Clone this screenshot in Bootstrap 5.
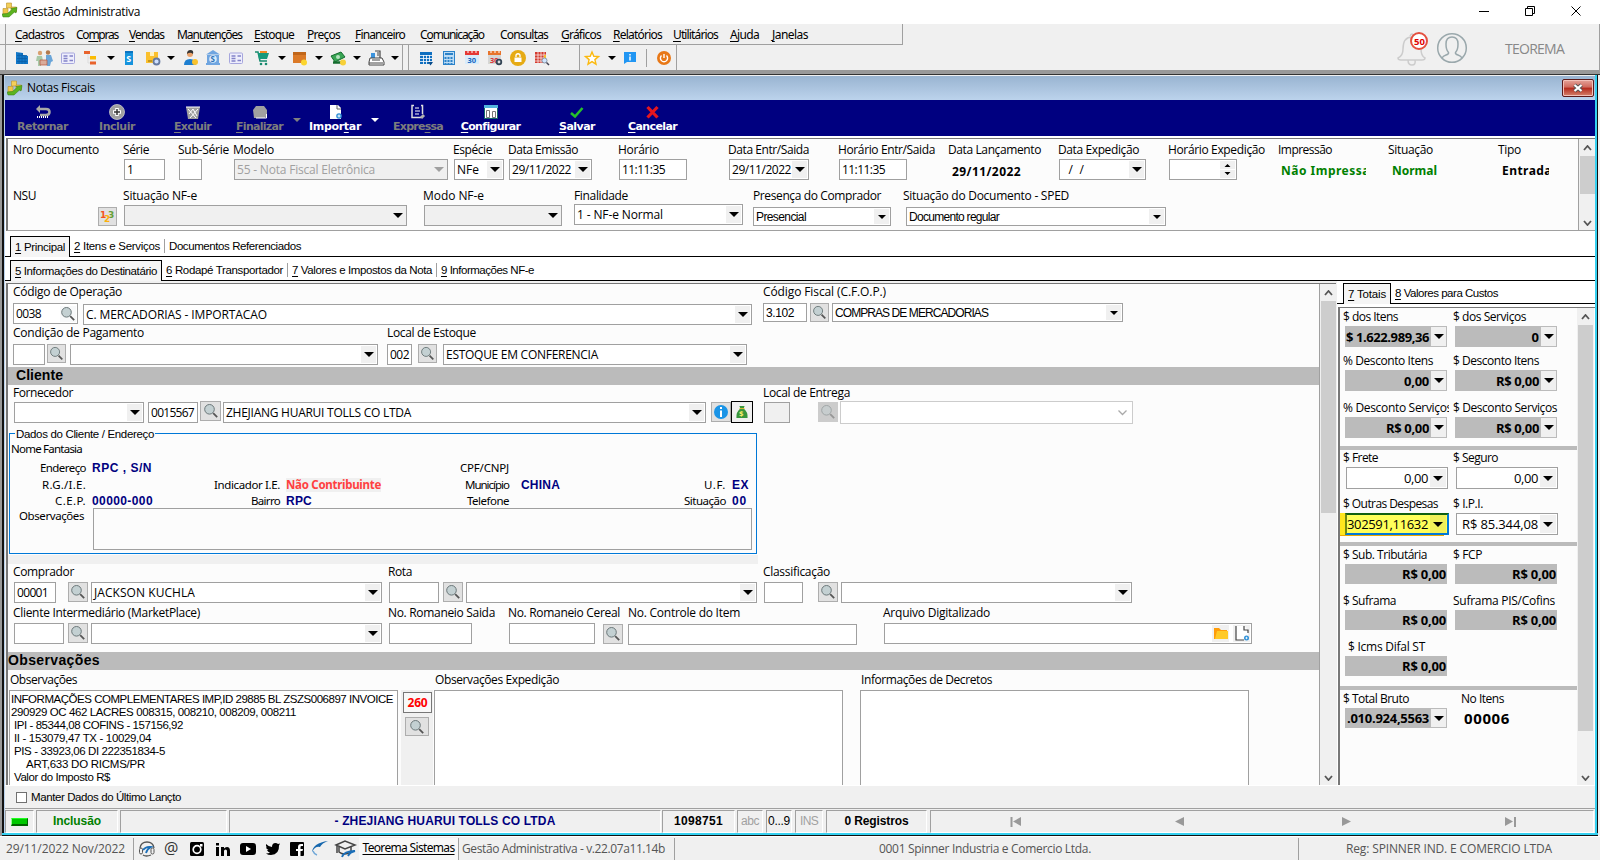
<!DOCTYPE html>
<html lang="pt-BR">
<head>
    <meta charset="UTF-8">
    <meta name="viewport" content="width=device-width, initial-scale=1.0">
    <title>Gestão Administrativa</title>
    <link href="https://cdn.jsdelivr.net/npm/bootstrap@5.3.0/dist/css/bootstrap.min.css" rel="stylesheet">
    <style>
        body { width: 1600px; height: 860px; overflow: hidden; background: #f0f0f0; color: #000; font: 12px/16px "Open Sans", "Noto Sans", sans-serif; }
        svg { display: block; overflow: visible; }
        [data-w] { display: inline-block; white-space: pre; justify-self: start; flex: none; }
        u { text-underline-offset: 2px; }

        /* rows: even tracks hold the items, odd tracks are the gaps */
        .slots, .labels { display: grid; align-items: start; }
        .slots > :nth-child(1) { grid-column: 2; } .slots > :nth-child(2) { grid-column: 4; }
        .slots > :nth-child(3) { grid-column: 6; } .slots > :nth-child(4) { grid-column: 8; }
        .slots > :nth-child(5) { grid-column: 10; } .slots > :nth-child(6) { grid-column: 12; }
        .slots > :nth-child(7) { grid-column: 14; } .slots > :nth-child(8) { grid-column: 16; }
        .slots > :nth-child(9) { grid-column: 18; } .slots > :nth-child(10) { grid-column: 20; }
        .slots > :nth-child(11) { grid-column: 22; } .slots > :nth-child(12) { grid-column: 24; }
        .slots > :nth-child(13) { grid-column: 26; } .slots > :nth-child(14) { grid-column: 28; }
        .slots > :nth-child(15) { grid-column: 30; } .slots > :nth-child(16) { grid-column: 32; }
        .slots > :nth-child(17) { grid-column: 34; } .slots > :nth-child(18) { grid-column: 36; }
        .slots > :nth-child(19) { grid-column: 38; }
        .slots > * { grid-row: 1; }
        .labels { padding-left: 5px; }

        /* title and menus */
        .titlebar { height: 24px; background: #fff; padding: 0 20px 4px 2px; }
        .titlebar .cap { margin-left: 5px; padding-top: 3px; }
        .topbar { height: 50px; background: #f0f0f0; border-bottom: 4px solid #999; border-right: 1px solid #a0a0a0; }
        .menubar { width: 903px; height: 21px; border: solid #a0a0a0; border-width: 0 1px 1px 0; padding-left: 15px; font: 12px/21px "Noto Sans", sans-serif; grid-template-columns: 61px 53px 48px 77px 53px 48px 65px 80px 61px 52px 60px 57px 42px 40px; }
        .grip { box-shadow: inset 5px 0 #f0f0f0, inset 6px 0 #a0a0a0; }
        .tools { height: 25px; align-items: center; border-right: 1px solid #a0a0a0; }
        .tools-a { width: 403px; grid-template-columns: 14px 16px 6px 16px 8px 16px 7px 16px 8px 8px 6px 16px 8px 16px 6px 8px 8px 16px 6px 16px 7px 16px 10px 16px 8px 8px 6px 16px 7px 8px 8px 16px 6px 8px 7px 16px 7px 8px; }
        .tools-b { width: 177px; grid-template-columns: 15px 16px 7px 16px 7px 16px 7px 16px 7px 16px 8px 16px; }
        .tools-c { width: 97px; grid-template-columns: 4px 16px 8px 8px 6px 16px 8px 1px 9px 16px; }
        .tri { width: 0; height: 0; border: solid transparent; border-width: 4px 4px 0; border-top-color: #000; justify-self: center; }
        .user-area { padding: 4px 35px 0 0; gap: 36px; }
        .user-name { color: #888; font-size: 14px; }

        /* inner window */
        .mdi { height: 762px; padding: 1px 5px 0 5px; background: linear-gradient(90deg, #999 2px, #111 2px 4px, #b9d1ea 4px 5px, transparent 5px calc(100% - 5px), #35d0f0 calc(100% - 5px) calc(100% - 3px), #111 calc(100% - 3px) calc(100% - 2px), #f0f0f0 calc(100% - 2px)), #f0f0f0; border-top: 1px solid #333; }
        .mdi-title { height: 24px; background: linear-gradient(#99b4d1, #bcd3ec); padding: 0 1px 0 2px; }
        .mdi-close { width: 32px; height: 18px; border: 1px solid #5c1a1a; border-radius: 2px; background: linear-gradient(#e5a49a, #d0695c 45%, #b4291b 50%, #d4826c); box-shadow: inset 0 0 0 1px #f2c0b8; }
        .mdi-foot { height: 3px; background: linear-gradient(#35d0f0 2px, #111 2px); margin: 0 -3px; }
        .actions { height: 36px; background: #000080; color: #fff; font: bold 11px/14px "DejaVu Sans", sans-serif; grid-template-columns: 12px 51px 31px 36px 39px 37px 25px 47px 10px 8px 8px 52px 10px 8px 14px 50px 18px 59px 39px 36px 33px 49px; }
        .actions .act { display: flex; flex-direction: column; align-items: center; padding-top: 4px; }
        .actions .act svg { flex: none; }
        .actions .off { color: #7d7d7d; }
        .actions .tri { margin-top: 18px; border-top-color: #fff; }
        .actions .tri.dim { border-top-color: #808080; }

        /* sunken panels */
        .sunk { margin-left: 1px; background: #fcfcfc; border: solid #777; border-width: 1px 0 0 2px; }
        .head-wrap { background: #fff; padding: 2px 0; }
        .head-wrap .sunk { border-bottom: 1px solid #a0a0a0; }
        .headform { width: 1566px; grid-template-rows: 20px 27px 18px 26px; }
        .cols-h1l { line-height: 22px; grid-template-columns: 110px 55px 55px 220px 55px repeat(10, 110px); }
        .cols-h1 { grid-template-columns: 116px 41px 14px 23px 32px 214px 6px 50px 5px 83px 27px 68px 42px 80px 30px 68px 45px 80px 27px 87px 23px 68px 44px 85px 26px 90px 20px 47px; }
        .cols-h2l { line-height: 20px; grid-template-columns: 110px 300px 151px 179px 150px 150px; }
        .cols-h2 { grid-template-columns: 90px 19px 7px 283px 17px 138px 12px 169px 10px 138px 15px 260px; }
        .bold12 { font: bold 12px/25px "Open Sans", sans-serif; white-space: nowrap; }
        .verd { font: bold 12px/24px "Noto Sans", sans-serif; overflow: hidden; white-space: nowrap; }
        .green { color: #008000; }

        /* fields */
        .fld { height: 21px; background: #fff; border: 1px solid #a0a0a0; display: flex; align-items: center; padding: 0 1px 0 2px; overflow: hidden; min-width: 0; white-space: pre; }
        .fld > .arr { margin-left: auto; width: 15px; height: 17px; background: #f0f0f0; flex: none; display: flex; align-items: center; justify-content: center; }
        .fld > .arr::after { content: ""; border: solid transparent; border-width: 5px 5px 0; border-top-color: #000; }
        .fld.low { height: 19px; } .fld.low > .arr { height: 15px; } .low > .arr::after { border-width: 4px 4px 0; }
        .fld.gray { background: #f0f0f0; }
        .fld.off { background: #f0f0f0; color: #a0a0a0; } .off > .arr::after { border-top-color: #a0a0a0; }
        .fld.pale { height: 23px; border-color: #ccc; }
        .sans { font-family: "Liberation Sans", sans-serif; }
        .lens { height: 20px; background: #e1e1e1; border: 1px solid #adadad; display: flex; align-items: center; justify-content: center; }
        .lens.low { height: 19px; }
        .lens.boxed { height: 22px; border-color: #000; background: #f0f0f0; }
        .lens.dim { background: #ccc; border-color: #ccc; }
        .t1 { margin-top: 1px; } .t3 { margin-top: 3px; }
        .section-bar { background: #bbb; font: bold 14px/17px "Liberation Sans", sans-serif; }

        /* tabs */
        .tabs { height: 24px; background: #fff; border-bottom: 1px solid #000; font: 11.5px/20px "Liberation Sans", sans-serif; padding-left: 5px; align-items: flex-end; }
        .tabs .on { height: 21px; background: #f5f5f5; border: 1px solid #000; border-bottom: 0; padding: 0 4px; margin-bottom: -1px; }
        .tabs .pg { padding: 0 4px; height: 20px; }
        .tabs .bar { width: 1px; height: 14px; background: #a0a0a0; margin-bottom: 3px; }
        .tabs-side { height: 23px; padding-left: 6px; }
        .workarea { height: 504px; }
        .workarea > .sunk { margin-top: 2px; flex: none; }
        .side { margin-left: 1px; background: #fff; }
        .side .sunk { height: 478px; margin-top: 3px; }

        /* scrollbars */
        .vscroll { width: 17px; background: #f0f0f0; display: flex; flex-direction: column; align-items: center; padding: 6px 1px 4px; border-left: 1px solid #a0a0a0; flex: none; }
        .vscroll i { width: 15px; background: #cdcdcd; margin-top: 5px; margin-bottom: auto; }
        .vs-head i { height: 38px; } .vs-main i { height: 212px; } .vs-tot i { height: 406px; }

        /* main form */
        .mainform { width: 1311px; grid-template-rows: 19px 22px 19px 23px 18px 16px 26px 128px 9px 18px 23px 18px 29px 18px 20px 95px; grid-template-columns: minmax(0, 1fr); }
        .l750 { grid-template-columns: 750px 200px; } .l374 { grid-template-columns: 374px 200px; } .l375 { grid-template-columns: 375px 375px 200px; }
        .l-rom { grid-template-columns: 375px 120px 120px 255px 200px; } .l-obs { grid-template-columns: 425px 426px 200px; padding-left: 2px; line-height: 20px; }
        .l-for { line-height: 15px; }
        .cols-op { grid-template-columns: 5px 65px 5px 669px 11px 44px 3px 19px 3px 291px; }
        .cols-pg { grid-template-columns: 5px 32px 2px 19px 4px 308px 9px 25px 6px 19px 6px 304px; }
        .cols-fo { grid-template-columns: 6px 130px 4px 50px 2px 21px 2px 483px 5px 20px 0 22px 11px 26px 28px 20px 2px 293px; }
        .cols-co { grid-template-columns: 6px 42px 12px 20px 3px 291px 7px 50px 4px 20px 3px 291px 7px 39px 15px 20px 3px 291px; }
        .cols-ro { grid-template-columns: 6px 50px 4px 20px 3px 291px 7px 83px 37px 86px 8px 20px 5px 229px 27px 368px; }
        .cols-ob { grid-template-columns: 1px 389px 3px 32px 1px 409px 17px 389px; align-items: stretch; }

        .client { margin: 6px 0 1px 1px; width: 748px; border: 1px solid #0078d7; display: grid; grid-template-rows: 7px 18px 17px 17px 15px 1fr; font: 11.5px/16px "Noto Sans", sans-serif; padding-left: 1px; }
        .client .ttl { height: 16px; margin: -8px 0 0 4px; background: #fcfcfc; font: 11.5px/16px "Liberation Sans", sans-serif; justify-self: start; padding: 0 1px; }
        .cl-row { display: grid; align-items: center; grid-template-columns: 75px 123px 71px 157px 72px 143px 74px 30px; }
        .cl-row > :nth-child(odd) { justify-self: end; }
        .cl-row > b { font: bold 12px/16px "Liberation Sans", sans-serif; color: #000080; margin-left: 6px; }
        .cl-row > b.warn { color: #ff4040; background: #f0f0f0; font: bold 11.5px/14px "Noto Sans", sans-serif; }
        .cl-note { border: 1px solid #a0a0a0; margin: 0 4px 3px 9px; }
        .cl-obs { margin: 0 0 0 8px; }
        .strip { background: #f0f0f0; width: 750px; }
        .memo { background: #fff; border: 1px solid #a0a0a0; border-bottom: 0; font: 11.5px/13px "Liberation Sans", sans-serif; padding: 2px 0 0 1px; }
        .memo div { height: 13px; } .memo .in { padding-left: 3px; } .memo .in2 { padding-left: 15px; }
        .obs-tools { background: #f0f0f0; }
        .code-btn { height: 21px; margin: 2px 1px 0 2px; border: 1px solid #777; background: #f8f8f8; color: #f00; font: bold 12px/19px "Noto Sans", sans-serif; text-align: center; }

        /* totals */
        .totals { width: 237px; display: grid; grid-template-rows: 18px 21px 23px 21px 26px 21px 12px 17px 22px 24px 22px 11px 18px 20px 26px 20px 26px 20px 14px 18px 20px; align-content: start; }
        .totals .labels { grid-template-columns: 110px 120px; padding-left: 3px; align-items: end; padding-bottom: 1px; }
        .totals .slots { grid-template-columns: 5px 102px 8px 102px; align-items: stretch; }
        .totals .cut { width: 106px; overflow: hidden; white-space: nowrap; }
        .val { background: #bbb; font-weight: bold; font-size: 13px; display: flex; align-items: center; justify-content: flex-end; padding: 0 1px; overflow: hidden; white-space: nowrap; }
        .val > .arr { width: 16px; height: 100%; margin-left: 2px; margin-right: -1px; background: #f0f0f0; border: 1px solid #bbb; border-left: 0; flex: none; display: flex; align-items: center; justify-content: center; }
        .val > .arr::after { content: ""; border: solid transparent; border-width: 5px 5px 0; border-top-color: #000; }
        .val.edit { background: #fff; border: 1px solid #a0a0a0; font-weight: normal; padding-right: 1px; margin-left: 1px; margin-right: -1px; }
        .val.edit > .arr { border: 0; height: 18px; margin-right: 0; }
        .val.hot { background: #ffff5a; border: 2px solid #0078d7; border-top-color: #116011; border-left-color: #708a10; box-shadow: -5px 0 #ffe61e, -5px 1px 0 #eda800; margin: 0 -2px 0 0; }
        .val.hot > .arr { background: #f0f05a; }
        .rule { background: #bbb; height: 4px; align-self: end; }
        .count { font: bold 15px/20px "Open Sans", sans-serif; padding-left: 9px; }

        /* status and footer */
        .keep { height: 24px; border-top: 1px solid #fff; border-bottom: 1px solid #a0a0a0; padding-left: 11px; font: 11.5px/22px "Liberation Sans", sans-serif; }
        .keep .form-check-input { width: 11px; height: 11px; border-radius: 0; border: 1px solid #707070; margin: 0 4px 0 0; }
        .status { height: 24px; padding-top: 1px; font: bold 12px/20px "Liberation Sans", sans-serif; text-align: center; grid-template-columns: 0 29px 2px 82px 2px 107px 2px 432px 1px 73px 2px 26px 3px 26px 3px 28px 3px 101px 3px 664px; }
        .status > * { height: 23px; border: 1px solid; border-color: #a0a0a0 #fff #fff #a0a0a0; white-space: nowrap; }
        .thin { font-weight: normal; color: #a0a0a0; }
        .navy { color: #000080; }
        .recnav { grid-template-columns: 79px 12px 153px 10px 157px 10px 153px 12px; align-items: center; }
        .led { width: 17px; height: 8px; background: #00c800; border: solid; border-width: 1px 1px 2px 1px; border-color: #20ff20 #006400 #006400 #90ff90; margin: 7px auto; }
        .foot { height: 24px; color: #555; font: 12px/20px "Open Sans", sans-serif; border-top: 1px solid #fff; align-items: center; grid-template-columns: 6px 119px 8px 1px 4px 18px 8px 18px 8px 18px 7px 16px 9px 18px 7px 16px 8px 16px 6px 20px 4px 24px 0 99px 0 1px 3px 204px 8px 1px 204px 213px 206px 1px 47px 207px; }
        .foot .bar { width: 1px; height: 22px; background: #a0a0a0; }
        .foot .site { background: #f8f8f8; color: #000; height: 22px; text-align: center; font-family: "Noto Sans", sans-serif; }
    </style>
</head>
<body class="d-flex flex-column">

    <!-- icons -->
    <svg width="0" height="0" class="position-absolute">
        <symbol id="i-app" viewBox="0 0 16 16"><path d="M4.500 1h5v5h-5z" fill="#f3cf5b" stroke="#b8902a" stroke-width=".6"/><path d="M1 6.500h5V12H1zM9 5h5.500v5H9z" fill="#efc64a" stroke="#b8902a" stroke-width=".6"/><path d="M0 12l5.500-.5L10 7.500 9 6.500l6-1-1 5.500-1.500-1-5.500 5H1z" fill="#5cb320" stroke="#2f7d12" stroke-width=".5"/></symbol>
        <symbol id="i-lens" viewBox="0 0 16 16"><path d="M10.2 10.2l4 4" stroke="#555" stroke-width="1.8"/><circle cx="6.500" cy="6.300" r="4.800" fill="#c3d0d2" stroke="#6b7779"/></symbol>
        <symbol id="i-card" viewBox="0 0 16 16"><rect x="1.500" y="3" width="13" height="10.500" rx="1" fill="#eeeefc" stroke="#a6a6dd"/><path d="M3.500 6h4M3.500 8.500h4M3.500 11h4M9.500 6h3.500M9.500 10.500h3.500" stroke="#8383c8" stroke-width="1.300"/></symbol>
        <symbol id="i-up" viewBox="0 0 9 6"><path d="M1 5l3.500-4L8 5" fill="none" stroke="#555" stroke-width="1.800"/></symbol>
        <symbol id="i-down" viewBox="0 0 9 6"><path d="M1 1l3.500 4L8 1" fill="none" stroke="#555" stroke-width="1.800"/></symbol>
    </svg>

    <!-- title -->
    <header class="titlebar d-flex align-items-center flex-shrink-0">
        <svg width="16" height="16"><use href="#i-app"/></svg>
        <span class="cap me-auto" data-w="117">Gestão Administrativa</span>
        <svg width="103" height="14" fill="none" stroke="#000"><path d="M2 8.500h10M48.500 5.500h7v7h-7zM50.500 5V3.500h7v7H56M94.500 3.500l9 9M103.500 3.500l-9 9"/></svg>
    </header>

    <!-- menus and tools -->
    <div class="topbar d-flex justify-content-between flex-shrink-0">
        <div>
            <nav class="menubar labels grip">
                <span data-w="49"><u>C</u>adastros</span><span data-w="42">Co<u>m</u>pras</span><span data-w="35"><u>V</u>endas</span><span data-w="65">Ma<u>n</u>utenções</span><span data-w="40"><u>E</u>stoque</span><span data-w="33"><u>P</u>reços</span><span data-w="50"><u>F</u>inanceiro</span><span data-w="64">C<u>o</u>municação</span><span data-w="48">Consul<u>t</u>as</span><span data-w="40"><u>G</u>ráficos</span><span data-w="49"><u>R</u>elatórios</span><span data-w="45"><u>U</u>tilitários</span><span data-w="29"><u>A</u>juda</span><span data-w="36"><u>J</u>anelas</span>
            </nav>
            <div class="d-flex">
                <div class="tools tools-a slots grip">
                    <svg width="16" height="16"><path d="M2 2l7 1v2l5 1v8H2z" fill="#1177c8"/><path d="M3 5.500h10M3 8.500h10M3 11.500h10M5 3v11M8 3v11M11 6v8" stroke="#0a5fa8" stroke-width=".8"/></svg>
                    <svg width="18" height="16"><circle cx="4" cy="3" r="2.200" fill="#d9a06f"/><circle cx="12" cy="2.500" r="2.200" fill="#b37a4d"/><path d="M1 6h5l1 5H5v5H2v-5H0z" fill="#a8c9a8"/><path d="M10 5h5l2 6-2 1-1 4h-3l-1-5z" fill="#6aa5d8"/><path d="M4 10h7v5H4z" fill="#d9ab9a" stroke="#b4543c" stroke-width=".7"/></svg>
                    <svg width="16" height="16"><use href="#i-card"/></svg>
                    <svg width="16" height="16"><path d="M5 4v9h4M5 8h5" stroke="#ddd" fill="none"/><path d="M1 1h6v3H1zM7 11.500h6v3H7z" fill="#e8632c"/><path d="M7 6h6v3.500H7z" fill="#fbbc04"/></svg>
                    <i class="tri"></i>
                    <svg width="16" height="16"><path d="M4 1h8v14H4z" fill="#1593dd"/><path d="M4 1h8v2H4z" fill="#0b74c0"/><text x="5.300" y="12" font-size="9" font-weight="bold" fill="#fff">S</text></svg>
                    <svg width="16" height="16"><path d="M1 2h12v11H1z" fill="#fbc02d"/><path d="M5 2h4v4H5z" fill="#fff2c0"/><path d="M3 11h4" stroke="#8a6a10"/><circle cx="11.500" cy="11.500" r="3" fill="#cfe0ff" stroke="#667aa0" stroke-width="1.800"/></svg>
                    <i class="tri"></i>
                    <svg width="16" height="16"><circle cx="7" cy="4" r="3" fill="#e9a26b"/><path d="M4 4q0-4 3.500-4T10 4Q7 1.500 4 4" fill="#333"/><path d="M1 15q0-6 6-6t6 6z" fill="#1e7fd0"/><circle cx="12" cy="12" r="3" fill="#f9c22e"/></svg>
                    <svg width="16" height="16"><path d="M8 0l7 4.500H1z" fill="#6fa5e0"/><path d="M2 5h12v8H2zM1 13h14v2H1z" fill="#6fa5e0"/><circle cx="8" cy="9" r="3.800" fill="#dcebfa"/><text x="5.500" y="12" font-size="8" font-weight="bold" fill="#2b72b8">S</text></svg>
                    <svg width="16" height="16"><use href="#i-card"/></svg>
                    <svg width="16" height="16"><path d="M1 2h3l2 9h7" fill="none" stroke="#178a6e" stroke-width="1.500"/><path d="M4 3h11l-2 6H5z" fill="#17997b"/><path d="M6 1h7v2H6z" fill="#f08a24"/><circle cx="7" cy="14" r="1.300" fill="#178a6e"/><circle cx="12" cy="14" r="1.300" fill="#178a6e"/></svg>
                    <i class="tri"></i>
                    <svg width="16" height="16"><path d="M1 2h13v11H1z" fill="#db7a28"/><path d="M1 2h13v3H1z" fill="#c1661a"/><circle cx="12" cy="12.500" r="3" fill="#fbd52e"/></svg>
                    <i class="tri"></i>
                    <svg width="16" height="16"><path d="M0 6l10-4 4 5-10 5z" fill="#3aa655" stroke="#146c2e"/><circle cx="7" cy="7" r="2" fill="#b6e3c0"/><path d="M2 12.500h8" stroke="#146c2e" stroke-width="2.500"/><circle cx="12" cy="12.500" r="3" fill="#f7d038"/></svg>
                    <i class="tri"></i>
                    <svg width="17" height="16"><path d="M3 3h4v5H3z" fill="#3b93dd"/><path d="M7 1h5v7M9 3h2M9 5h2" fill="none" stroke="#444" stroke-width="1.200"/><path d="M2 8h12l2 4v3H1v-3z" fill="#fff" stroke="#444"/><path d="M4 10h8M1 13h14" stroke="#444"/></svg>
                    <i class="tri"></i>
                </div>
                <div class="tools tools-b slots grip">
                    <svg width="16" height="16"><path d="M2 2h12v12H2z" fill="#0f6fc0"/><path d="M2 5.500h12M2 8.500h12M2 11.500h12M5.500 5v9M8.500 5v9M11.500 5v9" stroke="#fff" stroke-width=".8"/><path d="M10 12h5l-2.500 3.500z" fill="#0b4d8a"/></svg>
                    <svg width="16" height="16"><rect x="2.500" y="1.500" width="11" height="13" fill="#bcdcf5" stroke="#2b82c9"/><path d="M4 4h8" stroke="#2b82c9" stroke-width="2"/><path d="M4.500 7v7M7.500 7v7M10.500 7v7" stroke="#2b82c9" stroke-dasharray="2 1" stroke-width="2"/></svg>
                    <svg width="16" height="16"><path d="M1 2h14v12H1z" fill="#d8ecfb"/><path d="M1 1h14v4H1z" fill="#e53935"/><path d="M4 1v2M8 1v2M12 1v2" stroke="#fff"/><text x="3.500" y="12.500" font-size="7.500" font-weight="bold" fill="#1565c0">30</text></svg>
                    <svg width="16" height="16"><path d="M1 2h13v12H1z" fill="#d6d6d6"/><path d="M1 1h13v4H1z" fill="#e8742c"/><path d="M4 1v2M8 1v2M12 1v2" stroke="#fff"/><text x="3" y="12.500" font-size="7.500" font-weight="bold" fill="#d33">30</text><circle cx="12" cy="12" r="2.300" fill="#ddd" stroke="#345" stroke-width="1.800"/></svg>
                    <svg width="16" height="16"><circle cx="8" cy="8" r="8" fill="#e6ab14"/><path d="M4.500 7.500h7V12h-7z" fill="#fff"/><path d="M6 7V5q2-2.500 4 0v2" fill="none" stroke="#fff" stroke-width="1.300"/></svg>
                    <svg width="16" height="16"><path d="M1 2h11v11H1z" fill="#d33b2f"/><path d="M1 5h11M1 8h11M1 11h11M4 2v11M7 2v11M10 2v11" stroke="#fff" stroke-width=".7"/><path d="M10 5h2v4h-2z" fill="#f9c22e"/><circle cx="10.500" cy="10.500" r="2.500" fill="#cfe4ff" stroke="#89a"/><path d="M12.500 12.500l2.500 2.500" stroke="#445" stroke-width="1.500"/></svg>
                </div>
                <div class="tools tools-c slots">
                    <svg width="16" height="16"><path d="M8 2l1.800 4.300 4.700.3-3.600 3 1.100 4.600L8 11.700l-4 2.500 1.100-4.600-3.600-3 4.700-.3z" fill="#fff" stroke="#fbb90f" stroke-width="1.400"/></svg>
                    <i class="tri"></i>
                    <svg width="16" height="16"><path d="M2 2h12v10H5l-3 2z" fill="#2196f3"/><path d="M8 4v1.500M8 6.500v4" stroke="#fff" stroke-width="1.500"/></svg>
                    <svg width="1" height="18"><path d="M.5 0v18" stroke="#a0a0a0"/></svg>
                    <svg width="16" height="16"><circle cx="8" cy="8" r="7" fill="#e87817"/><path d="M5.500 5.500a3.600 3.600 0 1 0 5 0M8 4v4" fill="none" stroke="#fff" stroke-width="1.400"/></svg>
                </div>
            </div>
        </div>
        <div class="user-area d-flex align-items-center">
            <svg width="72" height="34" fill="none" stroke-width="1.500"><path d="M1 26q5-2 5-9 0-12 9-12t9 12q0 7 4 9 0 2-3 2H4q-3 0-3-2zM11 28q0 5 4 5t3-5M13 4q2-4 4 0" stroke="#ccc"/><circle cx="22" cy="9" r="8" fill="#fff" stroke="#e4503f" stroke-width="2"/><text x="17" y="12.500" font-size="9.500" font-weight="bold" fill="#e00000" font-family="Open Sans">50</text><g stroke="#9aa8ac"><circle cx="55" cy="16" r="14.300"/><path d="M45 26q1-2 4-3t2.500-2.500Q49 18 49 12q0-7 6-7t6 7q0 6-2.500 8.500-.5 1.500 2.500 2.500t4 3"/></g></svg>
            <span class="user-name" data-w="59">TEOREMA</span>
        </div>
    </div>

    <!-- Notas Fiscais -->
    <main class="mdi flex-shrink-0">
        <div class="mdi-title d-flex align-items-center">
            <svg width="16" height="16"><use href="#i-app"/></svg>
            <span class="ms-1 me-auto" data-w="68">Notas Fiscais</span>
            <div class="mdi-close d-flex align-items-center justify-content-center"><svg width="12" height="10"><path d="M2.500 2l7 6M9.500 2l-7 6" stroke="#555" stroke-width="4"/><path d="M2.500 2l7 6M9.500 2l-7 6" stroke="#fff" stroke-width="2.200"/></svg></div>
        </div>
        <div class="actions slots">
            <div class="act off"><svg width="16" height="16"><path d="M4 5h7q3.500 0 3.500 3T11 11H5" fill="none" stroke="#a8a8a8" stroke-width="2.500"/><path d="M1 5l4-4v8z" fill="#a8a8a8"/><path d="M2 13h12" stroke="#fff" stroke-width="2" stroke-dasharray="1 1"/></svg><span data-w="51">Retornar</span></div>
            <div class="act off"><svg width="16" height="16"><circle cx="8" cy="8" r="7.500" fill="#a0a0a0" stroke="#ccc" stroke-width=".8"/><path d="M8 4v8M4 8h8" stroke="#fff" stroke-width="3.500"/><path d="M8 5v6M5 8h6" stroke="#333" stroke-width="1.500"/></svg><span data-w="36"><u>I</u>ncluir</span></div>
            <div class="act off"><svg width="16" height="16"><path d="M1 3h14l-2 12H3z" fill="#a0a0a0"/><path d="M1 3h14M3 5l8 9M8 5l4 7M13 5l-8 9M8 5l-4 5" stroke="#fff"/></svg><span data-w="37"><u>E</u>xcluir</span></div>
            <div class="act off"><svg width="16" height="16"><path d="M4 2h8l3 4v5l-2 3H2L1 6z" fill="#a0a0a0"/><path d="M4 14h10.500V10" fill="none" stroke="#fff"/></svg><span data-w="47"><u>F</u>inalizar</span></div>
            <i class="tri dim"></i>
            <div class="act"><svg width="16" height="16"><path d="M3 1h8l3 3v11H3z" fill="#fff"/><path d="M10 1v4h4" fill="none" stroke="#666"/><circle cx="12" cy="12" r="2.800" fill="#2d8fd6"/><path d="M12 10.500v3M10.500 12h3" stroke="#fff"/></svg><span data-w="52">Impor<u>t</u>ar</span></div>
            <i class="tri"></i>
            <div class="act off"><svg width="16" height="16" fill="none"><path d="M4 1.500H2v12h9M12.500 10V1.500H11" stroke="#ddd" stroke-width="1.500"/><path d="M5 4h4M5 7h5M5 10h4" stroke="#fff"/><path d="M11 14l3-3" stroke="#b0b0b0" stroke-width="3"/></svg><span data-w="50">Expre<u>s</u>sa</span></div>
            <div class="act"><svg width="16" height="16"><path d="M1.500 1.500h13v13h-13z" fill="#fff" stroke="#166"/><path d="M1 1h14v3H1z" fill="#53b4df"/><path d="M3.500 6.500h3v7h-3zM9.500 7.500h3v6h-3z" fill="#fff" stroke="#777"/></svg><span data-w="59"><u>C</u>onfigurar</span></div>
            <div class="act"><svg width="16" height="16"><path d="M2 9l4 3.500L13.500 4" fill="none" stroke="#26c02a" stroke-width="2.600"/></svg><span data-w="36"><u>S</u>alvar</span></div>
            <div class="act"><svg width="16" height="16"><path d="M2.500 3l10 10.500M12.500 3l-10 10.500" stroke="#e5161f" stroke-width="3.200"/></svg><span data-w="49"><u>C</u>ancelar</span></div>
        </div>

        <div class="head-wrap">
            <div class="sunk d-flex overflow-hidden">
                <div class="headform d-grid flex-grow-1 overflow-hidden">
                    <div class="labels cols-h1l">
                        <span data-w="86">Nro Documento</span><span data-w="26">Série</span><span data-w="51">Sub-Série</span><span data-w="41">Modelo</span><span data-w="39">Espécie</span><span data-w="70">Data Emissão</span><span data-w="41">Horário</span><span data-w="81">Data Entr/Saida</span><span data-w="97">Horário Entr/Saida</span><span data-w="93">Data Lançamento</span><span data-w="81">Data Expedição</span><span data-w="97">Horário Expedição</span><span data-w="54">Impressão</span><span data-w="45">Situação</span><span data-w="23">Tipo</span>
                    </div>
                    <div class="slots cols-h1">
                        <div class="fld">1</div>
                        <div class="fld"></div>
                        <div class="fld off"><span data-w="138">55 - Nota Fiscal Eletrônica</span><i class="arr"></i></div>
                        <div class="fld"><span data-w="22">NFe</span><i class="arr"></i></div>
                        <div class="fld"><span data-w="59">29/11/2022</span><i class="arr"></i></div>
                        <div class="fld"><span data-w="43">11:11:35</span></div>
                        <div class="fld"><span data-w="59">29/11/2022</span><i class="arr"></i></div>
                        <div class="fld"><span data-w="43">11:11:35</span></div>
                        <div class="bold12"><span data-w="69">29/11/2022</span></div>
                        <div class="fld"><span data-w="22">  /  /</span><i class="arr"></i></div>
                        <div class="fld"><svg class="ms-auto" width="15" height="17"><path d="M0 0h15v8H0zM0 9h15v8H0z" fill="#f0f0f0"/><path d="M4.500 6L7.500 3l3 3zM4.500 11l3 3 3-3z"/></svg></div>
                        <div class="verd green"><span data-w="89">Não Impressa</span></div>
                        <div class="verd green"><span data-w="45">Normal</span></div>
                        <div class="verd"><span data-w="50">Entrada</span></div>
                    </div>
                    <div class="labels cols-h2l">
                        <span data-w="23">NSU</span><span data-w="74">Situação NF-e</span><span data-w="61">Modo NF-e</span><span data-w="54">Finalidade</span><span data-w="128">Presença do Comprador</span><span data-w="166">Situação do Documento - SPED</span>
                    </div>
                    <div class="slots cols-h2">
                        <div class="lens low t3"><svg width="15" height="13" font-family="DejaVu Sans" font-weight="bold" font-size="9"><text x="0" y="8" fill="#f4511e">1</text><text x="8" y="8" fill="#689f38">3</text><text x="4" y="12" fill="#fbb00c">2</text></svg></div>
                        <div class="fld gray t1"><i class="arr"></i></div>
                        <div class="fld gray t1"><i class="arr"></i></div>
                        <div class="fld"><span data-w="86">1 - NF-e Normal</span><i class="arr"></i></div>
                        <div class="fld low t3 sans"><span data-w="50">Presencial</span><i class="arr"></i></div>
                        <div class="fld low t3 sans"><span data-w="90">Documento regular</span><i class="arr"></i></div>
                    </div>
                </div>
                <div class="vscroll vs-head"><svg width="9" height="6"><use href="#i-up"/></svg><i></i><svg width="9" height="6"><use href="#i-down"/></svg></div>
            </div>
        </div>

        <div class="tabs d-flex">
            <div class="on"><span data-w="50"><u>1</u> Principal</span></div>
            <div class="pg"><span data-w="86"><u>2</u> Itens e Serviços</span></div><i class="bar"></i>
            <div class="pg"><span data-w="132">Documentos Referenciados</span></div>
        </div>
        <div class="tabs d-flex">
            <div class="on"><span data-w="142"><u>5</u> Informações do Destinatário</span></div>
            <div class="pg"><span data-w="117"><u>6</u> Rodapé Transportador</span></div><i class="bar"></i>
            <div class="pg"><span data-w="140"><u>7</u> Valores e Impostos da Nota</span></div><i class="bar"></i>
            <div class="pg"><span data-w="93"><u>9</u> Informações NF-e</span></div>
        </div>

        <div class="workarea d-flex">
            <div class="sunk d-flex overflow-hidden">
                <div class="mainform d-grid">
                    <div class="labels l750"><span data-w="109">Código de Operação</span><span data-w="123">Código Fiscal (C.F.O.P.)</span></div>
                    <div class="slots cols-op">
                        <div class="fld"><span data-w="25">0038</span><span class="ms-auto bg-light"><svg width="16" height="16"><use href="#i-lens"/></svg></span></div>
                        <div class="fld t1"><span data-w="181">C. MERCADORIAS - IMPORTACAO</span><i class="arr"></i></div>
                        <div class="fld low sans"><span data-w="28">3.102</span></div>
                        <div class="lens low"><svg width="15" height="15"><use href="#i-lens"/></svg></div>
                        <div class="fld low sans"><span data-w="153">COMPRAS DE MERCADORIAS</span><i class="arr"></i></div>
                    </div>
                    <div class="labels l374"><span data-w="131">Condição de Pagamento</span><span data-w="89">Local de Estoque</span></div>
                    <div class="slots cols-pg">
                        <div class="fld"></div>
                        <div class="lens low"><svg width="15" height="15"><use href="#i-lens"/></svg></div>
                        <div class="fld"><i class="arr"></i></div>
                        <div class="fld"><span data-w="19">002</span></div>
                        <div class="lens low"><svg width="15" height="15"><use href="#i-lens"/></svg></div>
                        <div class="fld"><span data-w="152">ESTOQUE EM CONFERENCIA</span><i class="arr"></i></div>
                    </div>
                    <div class="section-bar ps-2"><span data-w="47">Cliente</span></div>
                    <div class="labels l750 l-for"><span data-w="60">Fornecedor</span><span data-w="87">Local de Entrega</span></div>
                    <div class="slots cols-fo">
                        <div class="fld t1"><i class="arr"></i></div>
                        <div class="fld t1"><span data-w="43">0015567</span></div>
                        <div class="lens"><svg width="16" height="16"><use href="#i-lens"/></svg></div>
                        <div class="fld t1"><span data-w="185">ZHEJIANG HUARUI TOLLS CO LTDA</span><i class="arr"></i></div>
                        <div class="lens t1"><svg width="16" height="16"><circle cx="8" cy="8" r="7" fill="#1a94e6"/><path d="M8 3v2M8 6.500V13" stroke="#fff" stroke-width="2"/></svg></div>
                        <div class="lens boxed"><svg width="12" height="14" viewBox="0 0 14 16"><path d="M4 1h6L9 4q5 4 4.500 11H.5Q0 8 5 4z" fill="#38963d"/><path d="M4 4h6" stroke="#f9c22e"/><text x="3.500" y="13" font-size="9" font-weight="bold" fill="#f5ea6a">$</text></svg></div>
                        <div class="fld gray t1"></div>
                        <div class="lens dim t1"><svg width="16" height="16" opacity=".45"><use href="#i-lens"/></svg></div>
                        <div class="fld pale"><svg class="ms-auto me-1" width="9" height="6"><path d="M.5.5l4 4 4-4" fill="none" stroke="#aaa" stroke-width="1.300"/></svg></div>
                    </div>
                    <div class="client">
                        <div class="ttl"><span data-w="138">Dados do Cliente / Endereço</span></div>
                        <div><span data-w="71">Nome Fantasia</span></div>
                        <div class="cl-row"><span data-w="46">Endereço</span><b data-w="60">RPC , S/N</b><i></i><i></i><span data-w="49">CPF/CNPJ</span></div>
                        <div class="cl-row"><span data-w="44">R.G./I.E.</span><i></i><span data-w="66">Indicador I.E.</span><b class="warn" data-w="95">Não Contribuinte</b><span data-w="44">Município</span><b class="ms-2 ps-1" data-w="39">CHINA</b><span data-w="22">U.F.</span><b data-w="17">EX</b></div>
                        <div class="cl-row"><span data-w="31">C.E.P.</span><b data-w="61">00000-000</b><span data-w="29">Bairro</span><b data-w="26">RPC</b><span data-w="42">Telefone</span><i></i><span data-w="42">Situação</span><b data-w="15">00</b></div>
                        <div class="d-flex"><span class="cl-obs" data-w="65">Observações</span><div class="cl-note flex-grow-1"></div></div>
                    </div>
                    <div class="strip"></div>
                    <div class="labels l375"><span data-w="61">Comprador</span><span data-w="24">Rota</span><span data-w="67">Classificação</span></div>
                    <div class="slots cols-co">
                        <div class="fld"><span data-w="31">00001</span></div>
                        <div class="lens"><svg width="16" height="16"><use href="#i-lens"/></svg></div>
                        <div class="fld"><span data-w="101">JACKSON KUCHLA</span><i class="arr"></i></div>
                        <div class="fld"></div>
                        <div class="lens"><svg width="16" height="16"><use href="#i-lens"/></svg></div>
                        <div class="fld"><i class="arr"></i></div>
                        <div class="fld"></div>
                        <div class="lens"><svg width="16" height="16"><use href="#i-lens"/></svg></div>
                        <div class="fld"><i class="arr"></i></div>
                    </div>
                    <div class="labels l-rom"><span data-w="187">Cliente Intermediário (MarketPlace)</span><span data-w="107">No. Romaneio Saida</span><span data-w="112">No. Romaneio Cereal</span><span data-w="112">No. Controle do Item</span><span data-w="107">Arquivo Digitalizado</span></div>
                    <div class="slots cols-ro">
                        <div class="fld"></div>
                        <div class="lens"><svg width="16" height="16"><use href="#i-lens"/></svg></div>
                        <div class="fld"><i class="arr"></i></div>
                        <div class="fld"></div>
                        <div class="fld"></div>
                        <div class="lens t1"><svg width="16" height="16"><use href="#i-lens"/></svg></div>
                        <div class="fld t1"></div>
                        <div class="fld"><svg class="ms-auto" width="38" height="17"><path d="M0 0h17v17H0zM21 0h17v17H21z" fill="#f0f0f0"/><path d="M2 3h5l2 2h6v9H2z" fill="#ff9d0a"/><path d="M5 6h11v8H3z" fill="#ffca28"/><path d="M24 1h8l4 4v10H24z" fill="#fff"/><path d="M32 15h-8V1M32 1v4h4v3" fill="none" stroke="#444" stroke-width="1.200"/><circle cx="34.500" cy="13" r="2.500" fill="#2d8fd6"/><path d="M34.500 11.800v2.400M33.300 13h2.400" stroke="#fff" stroke-width=".8"/></svg></div>
                    </div>
                    <div class="section-bar"><span data-w="92">Observações</span></div>
                    <div class="labels l-obs"><span data-w="67">Observações</span><span data-w="124">Observações Expedição</span><span data-w="131">Informações de Decretos</span></div>
                    <div class="slots cols-ob">
                        <div class="memo">
                            <div><span data-w="382">INFORMAÇÕES COMPLEMENTARES IMP,ID 29885 BL ZSZS006897 INVOICE</span></div>
                            <div><span data-w="285">290929 OC 462 LACRES 008315, 008210, 008209, 008211</span></div>
                            <div class="in"><span data-w="169">IPI - 85344,08 COFINS - 157156,92</span></div>
                            <div class="in"><span data-w="137">II - 153079,47 TX - 10029,04</span></div>
                            <div class="in"><span data-w="151">PIS - 33923,06 DI 222351834-5</span></div>
                            <div class="in2"><span data-w="119">ART,633 DO RICMS/PR</span></div>
                            <div class="in"><span data-w="96">Valor do Imposto R$</span></div>
                        </div>
                        <div class="obs-tools">
                            <div class="code-btn"><span data-w="20">260</span></div>
                            <div class="lens low mx-1 mt-1"><svg width="16" height="16"><use href="#i-lens"/></svg></div>
                        </div>
                        <div class="memo"></div>
                        <div class="memo"></div>
                    </div>
                </div>
                <div class="vscroll vs-main"><svg width="9" height="6"><use href="#i-up"/></svg><i></i><svg width="9" height="6"><use href="#i-down"/></svg></div>
            </div>

            <div class="side flex-grow-1">
                <div class="tabs tabs-side d-flex">
                    <div class="on"><span data-w="38"><u>7</u> Totais</span></div>
                    <div class="pg"><span data-w="103"><u>8</u> Valores para Custos</span></div>
                </div>
                <div class="sunk d-flex">
                    <div class="totals">
                        <div class="labels"><span data-w="55">$ dos Itens</span><span data-w="73">$ dos Serviços</span></div>
                        <div class="slots"><div class="val"><span data-w="83">$ 1.622.989,36</span><i class="arr"></i></div><div class="val">0<i class="arr"></i></div></div>
                        <div class="labels"><span data-w="90">% Desconto Itens</span><span data-w="86">$ Desconto Itens</span></div>
                        <div class="slots"><div class="val"><span data-w="25">0,00</span><i class="arr"></i></div><div class="val"><span data-w="43">R$ 0,00</span><i class="arr"></i></div></div>
                        <div class="labels"><div class="cut"><span data-w="109">% Desconto Serviços</span></div><span data-w="104">$ Desconto Serviços</span></div>
                        <div class="slots"><div class="val"><span data-w="43">R$ 0,00</span><i class="arr"></i></div><div class="val"><span data-w="43">R$ 0,00</span><i class="arr"></i></div></div>
                        <div class="rule"></div>
                        <div class="labels"><span data-w="35">$ Frete</span><span data-w="45">$ Seguro</span></div>
                        <div class="slots"><div class="val edit"><span data-w="24">0,00</span><i class="arr"></i></div><div class="val edit"><span data-w="24">0,00</span><i class="arr"></i></div></div>
                        <div class="labels"><span data-w="95">$ Outras Despesas</span><span data-w="30">$ I.P.I.</span></div>
                        <div class="slots"><div class="val edit hot"><span data-w="81">302591,11632</span><i class="arr"></i></div><div class="val edit"><span data-w="76">R$ 85.344,08</span><i class="arr"></i></div></div>
                        <div class="rule"></div>
                        <div class="labels"><span data-w="84">$ Sub. Tributária</span><span data-w="29">$ FCP</span></div>
                        <div class="slots"><div class="val"><span data-w="44">R$ 0,00</span></div><div class="val"><span data-w="44">R$ 0,00</span></div></div>
                        <div class="labels"><span data-w="53">$ Suframa</span><span data-w="102">Suframa PIS/Cofins</span></div>
                        <div class="slots"><div class="val"><span data-w="44">R$ 0,00</span></div><div class="val"><span data-w="44">R$ 0,00</span></div></div>
                        <div class="labels ps-2"><span data-w="77">$ Icms Difal ST</span></div>
                        <div class="slots"><div class="val"><span data-w="44">R$ 0,00</span></div></div>
                        <div class="rule"></div>
                        <div class="labels"><span data-w="66">$ Total Bruto</span><span class="ms-2" data-w="43">No Itens</span></div>
                        <div class="slots"><div class="val"><span data-w="82">.010.924,5563</span><i class="arr"></i></div><div class="count"><span data-w="46">00006</span></div></div>
                    </div>
                    <div class="vscroll vs-tot border-0"><svg width="9" height="6"><use href="#i-up"/></svg><i></i><svg width="9" height="6"><use href="#i-down"/></svg></div>
                </div>
            </div>
        </div>

        <div class="keep d-flex align-items-center"><input class="form-check-input" type="checkbox"><span data-w="150">Manter Dados do Último Lançto</span></div>
        <div class="status slots">
            <div><div class="led"></div></div>
            <div class="green"><span data-w="48">Inclusão</span></div>
            <div></div>
            <div class="navy"><span data-w="221">- ZHEJIANG HUARUI TOLLS CO LTDA</span></div>
            <div><span data-w="49">1098751</span></div>
            <div class="thin"><span data-w="18">abc</span></div>
            <div class="fw-normal"><span data-w="22">0...9</span></div>
            <div class="thin"><span data-w="18">INS</span></div>
            <div><span data-w="64">0 Registros</span></div>
            <div class="recnav slots">
                <svg width="12" height="10"><path d="M1.500 0v10" stroke="#999" stroke-width="2"/><path d="M11 0v9L3 4.500z" fill="#999"/></svg>
                <svg width="10" height="10"><path d="M9 0v9L0 4.500z" fill="#999"/></svg>
                <svg width="10" height="10"><path d="M0 0v9l9-4.500z" fill="#999"/></svg>
                <svg width="12" height="10"><path d="M10 0v10" stroke="#999" stroke-width="2"/><path d="M0 0v9l8-4.500z" fill="#999"/></svg>
            </div>
        </div>
        <div class="mdi-foot"></div>
    </main>

    <!-- footer -->
    <footer class="foot slots flex-shrink-0">
        <span data-w="119">29/11/2022 Nov/2022</span><i class="bar"></i>
        <svg width="18" height="18" fill="none"><path d="M2 8q1-6 7-6t7 6" stroke="#555" stroke-width="1.300"/><rect x="1.500" y="8" width="3" height="6" rx="1.500" stroke="#555"/><rect x="13" y="8" width="3" height="6" rx="1.500" stroke="#555"/><path d="M5 10q3-4 8-3-4 2-5 6" stroke="#1c6fb8" stroke-width="1.800"/><path d="M5 15q3 2 8 0" stroke="#555" stroke-width="1.300"/></svg>
        <svg width="18" height="18"><text x="0" y="14" font-size="16" fill="#333" font-family="Open Sans">@</text></svg>
        <svg width="18" height="18"><rect y="2" width="14" height="14" rx="1.500"/><circle cx="7" cy="9.500" r="3.800" fill="none" stroke="#fff" stroke-width="1.700"/><path d="M10 4h2.500v2.500H10z" fill="#fff"/></svg>
        <svg width="16" height="18"><path d="M1 7h3v9H1zM1 3h3v2.500H1zM6 7h3v1.500Q10 7 12 7q3 0 3 4v5h-3v-5q0-1.500-1.500-1.500T9 11v5H6z"/></svg>
        <svg width="18" height="18"><rect y="3" width="16" height="12" rx="3"/><path d="M6 6v6l5-3z" fill="#fff"/></svg>
        <svg width="16" height="18"><path d="M1 4q3 3 6 3 0-4 3.500-4 1.500 0 2.500 1l2-.5-1 2q.5 9-8 9.500-3 0-5-1.500 3 0 4-1-2-.5-3-2.500H3.500Q1 9 1 7l1 .5Q.5 6 1 4"/></svg>
        <svg width="16" height="18"><rect x="1" y="2" width="14" height="14" rx="1"/><path d="M9 16v-5H7V9h2V7q0-3 3-3h2v2h-1.500q-1 0-1 1v2H14l-.5 2h-2v5z" fill="#fff"/></svg>
        <svg width="20" height="18"><path d="M1 12Q2 3 17 1q-6 2-8 6Q4 6 1 12z" fill="#1667ad"/><path d="M2 11q1 3 4 4" fill="none" stroke="#70a8d8" stroke-width="1.500"/></svg>
        <svg width="24" height="20" fill="none"><path d="M1 6l9-4 10 4-10 4z" stroke="#444" stroke-width="1.500"/><path d="M4 8v5q5 4 12 0V8M2 7v7" stroke="#444" stroke-width="1.500"/><path d="M7 18q2-6 13-6-5 1-7 5" stroke="#1c6fb8" stroke-width="1.800"/></svg>
        <div class="site"><u data-w="92">Teorema Sistemas</u></div><i class="bar"></i>
        <span data-w="203">Gestão Administrativa - v.22.07a11.14b</span><i class="bar"></i>
        <span data-w="212">0001 Spinner Industria e Comercio Ltda.</span><i class="bar"></i>
        <span data-w="206">Reg: SPINNER IND. E COMERCIO LTDA</span>
    </footer>

    <script src="https://cdn.jsdelivr.net/npm/bootstrap@5.3.0/dist/js/bootstrap.bundle.min.js"></script>
    <script>
        // spread each text over the width given in data-w
        document.querySelectorAll("[data-w]").forEach(el => {
            let cs = getComputedStyle(el);
            let w = el.getBoundingClientRect().width - parseFloat(cs.paddingLeft) - parseFloat(cs.paddingRight);
            el.style.letterSpacing = ((el.dataset.w - w) / el.textContent.length).toFixed(3) + "px";
        });
    </script>
</body>
</html>
